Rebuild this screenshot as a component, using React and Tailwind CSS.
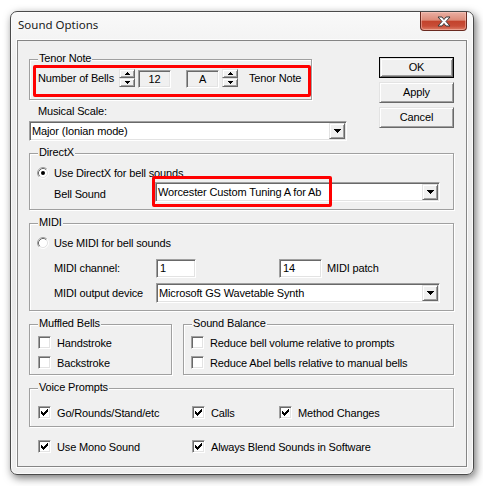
import React from "react";

const font = "font-['Liberation_Sans',Arial,sans-serif] text-[11px] leading-[13px] tracking-[-0.15px] text-black";

const Raised = ({ className = "", children }) => (
  <div
    className={
      "border border-t-[#e3e3e3] border-l-[#e3e3e3] border-b-[#696969] border-r-[#696969] bg-[#f0f0f0] shadow-[inset_1px_1px_0_#ffffff,inset_-1px_-1px_0_#a0a0a0] " +
      className
    }
  >
    {children}
  </div>
);

const Sunken = ({ className = "", children }) => (
  <div
    className={
      "border border-t-[#a0a0a0] border-l-[#a0a0a0] border-b-white border-r-white shadow-[inset_1px_1px_0_#696969,inset_-1px_-1px_0_#e3e3e3] " +
      className
    }
  >
    {children}
  </div>
);

const DownArrow = () => (
  <svg width="7" height="4" viewBox="0 0 7 4">
    <path d="M0 0h7v1h-1v1h-1v1h-1v1h-1v-1h-1v-1h-1v-1h-1z" fill="#000" />
  </svg>
);

const SmallUp = () => (
  <svg width="5" height="3" viewBox="0 0 5 3">
    <path d="M2 0h1v1h1v1h1v1h-5v-1h1v-1h1z" fill="#000" />
  </svg>
);

const SmallDown = () => (
  <svg width="5" height="3" viewBox="0 0 5 3">
    <path d="M0 0h5v1h-1v1h-1v1h-1v-1h-1v-1h-1z" fill="#000" />
  </svg>
);

const Combo = ({ className = "", text }) => (
  <Sunken className={"bg-white p-[1px] flex items-stretch " + className}>
    <div className="flex-1 pl-[1px] flex items-center whitespace-nowrap overflow-hidden">{text}</div>
    <Raised className="w-[16px] flex items-center justify-center">
      <DownArrow />
    </Raised>
  </Sunken>
);

const Spinner = () => (
  <div className="w-[16px] h-[18px] flex flex-col shrink-0">
    <Raised className="h-[9px] flex items-center justify-center">
      <SmallUp />
    </Raised>
    <Raised className="h-[9px] flex items-center justify-center">
      <SmallDown />
    </Raised>
  </div>
);

const Check = ({ checked }) => (
  <div className="w-[13px] h-[13px] shrink-0 bg-white border border-t-[#a0a0a0] border-l-[#a0a0a0] border-b-white border-r-white shadow-[inset_1px_1px_0_#696969,inset_-1px_-1px_0_#e3e3e3] flex items-center justify-center">
    {checked && (
      <svg width="7" height="7" viewBox="0 0 7 7">
        <path
          d="M0 2h1v3h-1z M1 3h1v3h-1z M2 4h1v3h-1z M3 3h1v3h-1z M4 2h1v3h-1z M5 1h1v3h-1z M6 0h1v3h-1z"
          fill="#000"
        />
      </svg>
    )}
  </div>
);

const Radio = ({ checked }) => (
  <svg width="12" height="12" viewBox="0 0 12 12" className="shrink-0">
    <circle cx="6" cy="6" r="5" fill="#ffffff" />
    <path d="M2.11 9.89 A5.5 5.5 0 0 1 9.89 2.11" stroke="#a0a0a0" fill="none" />
    <path d="M9.89 2.11 A5.5 5.5 0 0 1 2.11 9.89" stroke="#ffffff" fill="none" />
    <path d="M2.82 9.18 A4.5 4.5 0 0 1 9.18 2.82" stroke="#696969" fill="none" />
    <path d="M9.18 2.82 A4.5 4.5 0 0 1 2.82 9.18" stroke="#e3e3e3" fill="none" />
    {checked && <circle cx="6" cy="6" r="2" fill="#000" />}
  </svg>
);

const Group = ({ label, className = "", children }) => (
  <div
    className={
      "relative border border-[#a0a0a0] shadow-[inset_1px_1px_0_#ffffff,1px_1px_0_#ffffff] " + className
    }
  >
    <span className="absolute left-[8px] top-[-8px] px-[1px] bg-[#f0f0f0] leading-[13px] whitespace-nowrap">
      {label}
    </span>
    {children}
  </div>
);

const CheckItem = ({ checked, label, className = "" }) => (
  <div className={"flex items-center gap-[6px] h-[13px] whitespace-nowrap " + className}>
    <Check checked={checked} />
    <span className="mt-[1px]">{label}</span>
  </div>
);

const Button = ({ children, isDefault }) =>
  isDefault ? (
    <div className="h-[21px] border border-black">
      <Raised className="h-full flex items-center justify-center">{children}</Raised>
    </div>
  ) : (
    <Raised className="h-[21px] flex items-center justify-center">{children}</Raised>
  );

const CloseGlyph = () => (
  <svg width="14" height="11" viewBox="0 0 14 11">
    <path
      d="M1 1h4l2 2.5 2-2.5h4l-4 4.5 4 4.5h-4l-2-2.5-2 2.5h-4l4-4.5z"
      fill="#ffffff"
      stroke="#3b3b3b"
      strokeWidth="1"
      strokeLinejoin="round"
    />
  </svg>
);

export default function App() {
  return (
    <div className="w-[483px] h-[486px] bg-white overflow-hidden pt-[11px] pl-[10px]">
      <div className="w-[464px] h-[464px] rounded-[7px] border border-[#4a4a4a] bg-[linear-gradient(180deg,#f9f9f9_0%,#f0f0f0_10%,#e9e9e9_60%,#eeeeee_100%)] shadow-[2px_3px_9px_rgba(0,0,0,0.55),inset_0_0_0_1px_rgba(255,255,255,0.7)] flex flex-col">
        <div className="h-[28px] flex items-start shrink-0">
          <div className="pl-[7px] mt-[5px] font-['Noto_Sans',sans-serif] text-[11.5px] leading-[16px] text-[#1a1a1a] [text-shadow:0_0_6px_#ffffff]">
            Sound Options
          </div>
          <div className="ml-auto mr-[6px] w-[47px] h-[19px] rounded-b-[4px] border border-t-0 border-[#6a2a20] bg-[linear-gradient(180deg,#eab0a3_0%,#dd8b78_45%,#c3432c_52%,#c84d37_78%,#de7e67_100%)] shadow-[inset_0_0_0_1px_rgba(255,210,200,0.45)] flex items-center justify-center">
            <CloseGlyph />
          </div>
        </div>
        <div
          className={
            "mx-[6px] w-[450px] h-[427px] border border-[#858585] bg-[#f0f0f0] pl-[11px] pr-[12px] flex flex-col shadow-[0_0_0_1px_rgba(255,255,255,0.8)] " +
            font
          }
        >
          {/* Row 1 */}
          <div className="flex items-start">
            <div className="w-[318px] flex flex-col">
              <Group label="Tenor Note" className="mt-[18px] w-[283px] h-[41px]">
                <div className="mt-[9px] pl-[8px] flex items-start h-[18px]">
                  <span className="w-[81px] mt-[3px] whitespace-nowrap">Number of Bells</span>
                  <Spinner />
                  <Sunken className="ml-[3px] mt-[1px] w-[33px] h-[18px] bg-[#f0f0f0] flex items-center justify-center">
                    12
                  </Sunken>
                  <Sunken className="ml-[15px] mt-[1px] w-[33px] h-[18px] bg-[#f0f0f0] flex items-center justify-center">
                    A
                  </Sunken>
                  <div className="ml-[3px]">
                    <Spinner />
                  </div>
                  <span className="ml-[11px] mt-[3px] whitespace-nowrap">Tenor Note</span>
                </div>
                <div className="absolute left-[3px] top-[5px] w-[278px] h-[32px] border-[3px] border-[#ff0000] rounded-[2px]" />
              </Group>
              <div className="mt-[5px] pl-[9px] h-[13px]">Musical Scale:</div>
              <Combo className="mt-[3px] w-[318px] h-[20px]" text="Major (Ionian mode)" />
            </div>
            <div className="ml-auto w-[75px] mt-[16px] flex flex-col gap-[4px]">
              <Button isDefault>OK</Button>
              <Button>Apply</Button>
              <Button>Cancel</Button>
            </div>
          </div>

          {/* DirectX */}
          <Group label="DirectX" className="mt-[12px] h-[57px] pl-[7px]">
            <div className="mt-[12px] h-[13px] flex items-center gap-[5px]">
              <Radio checked />
              <span className="mt-[1px]">Use DirectX for bell sounds</span>
            </div>
            <div className="mt-[3px] flex items-start">
              <span className="ml-[17px] w-[101px] mt-[6px]">Bell Sound</span>
              <Combo className="w-[285px] h-[20px]" text="Worcester Custom Tuning A for Ab" />
            </div>
            <div className="absolute left-[122px] top-[22px] w-[180px] h-[31px] border-[3px] border-[#ff0000] rounded-[2px]" />
          </Group>

          {/* MIDI */}
          <Group label="MIDI" className="mt-[13px] h-[88px] pl-[7px]">
            <div className="mt-[12px] h-[13px] flex items-center gap-[5px]">
              <Radio />
              <span className="mt-[1px]">Use MIDI for bell sounds</span>
            </div>
            <div className="mt-[10px] flex items-start">
              <span className="ml-[17px] w-[102px] mt-[3px]">MIDI channel:</span>
              <Sunken className="w-[40px] h-[19px] bg-white pl-[3px] flex items-center">1</Sunken>
              <Sunken className="ml-[83px] w-[43px] h-[19px] bg-white pl-[3px] flex items-center">14</Sunken>
              <span className="ml-[5px] mt-[3px]">MIDI patch</span>
            </div>
            <div className="mt-[5px] flex items-start">
              <span className="ml-[17px] w-[102px] mt-[4px]">MIDI output device</span>
              <Combo className="w-[284px] h-[20px]" text="Microsoft GS Wavetable Synth" />
            </div>
          </Group>

          {/* Muffled / Sound Balance */}
          <div className="mt-[13px] h-[51px] flex gap-[11px]">
            <Group label="Muffled Bells" className="w-[143px] h-full pl-[8px]">
              <CheckItem className="mt-[11px]" label="Handstroke" />
              <CheckItem className="mt-[7px]" label="Backstroke" />
            </Group>
            <Group label="Sound Balance" className="flex-1 h-full pl-[7px]">
              <CheckItem className="mt-[11px]" label="Reduce bell volume relative to prompts" />
              <CheckItem className="mt-[7px]" label="Reduce Abel bells relative to manual bells" />
            </Group>
          </div>

          {/* Voice Prompts */}
          <Group label="Voice Prompts" className="mt-[13px] h-[39px] pl-[8px]">
            <div className="mt-[17px] flex">
              <CheckItem checked className="w-[154px]" label="Go/Rounds/Stand/etc" />
              <CheckItem checked className="w-[87px]" label="Calls" />
              <CheckItem checked label="Method Changes" />
            </div>
          </Group>

          <div className="mt-[13px] pl-[9px] flex">
            <CheckItem checked className="w-[154px]" label="Use Mono Sound" />
            <CheckItem checked label="Always Blend Sounds in Software" />
          </div>
        </div>
      </div>
    </div>
  );
}
